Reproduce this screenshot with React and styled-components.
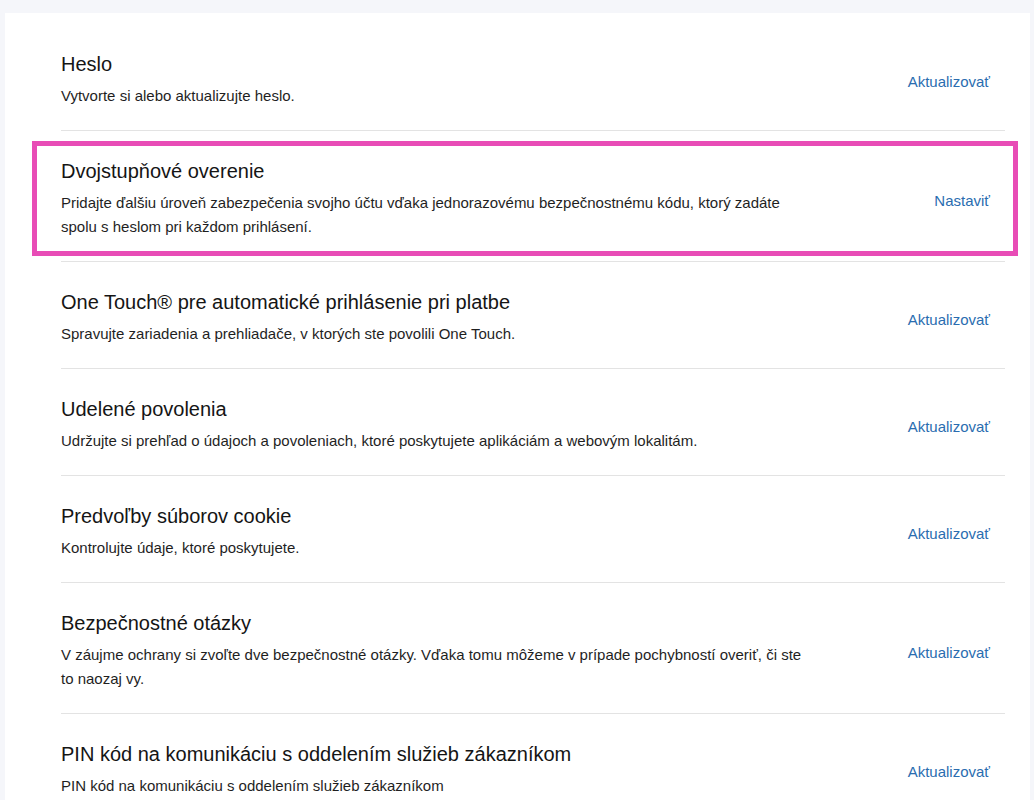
import React from "react";
import styled, { createGlobalStyle } from "styled-components";

const GlobalStyle = createGlobalStyle`
  html, body {
    margin: 0;
    padding: 0;
    background: #f5f6fa;
  }
  body {
    font-family: "Liberation Sans", Arial, sans-serif;
  }
`;

const Page = styled.div`
  padding: 13px 4px 0 5px;
`;

const Card = styled.section`
  background: #ffffff;
  padding: 11px 25px 0 56px;
`;

const Row = styled.div`
  position: relative;
  display: flex;
  align-items: center;
  justify-content: space-between;
  padding: 28px 15px 22px 0;
  border-bottom: 1px solid #e3e3e3;
`;

const Info = styled.div`
  max-width: 748px;
`;

const Title = styled.h3`
  margin: 0 0 8px;
  font-size: 20px;
  line-height: 24px;
  font-weight: 400;
  color: #151515;
`;

const Desc = styled.p`
  margin: 0;
  font-size: 15px;
  line-height: 24px;
  color: #1f1f1f;
`;

const Action = styled.a`
  margin-top: 4px;
  font-size: 15px;
  line-height: 24px;
  color: #2a6db0;
  text-decoration: none;
  white-space: nowrap;
  cursor: pointer;
`;

const Highlight = styled.div`
  position: absolute;
  top: 10px;
  bottom: 5px;
  left: -29px;
  right: -13px;
  border: 5px solid #e84cb6;
  pointer-events: none;
`;

const items = [
  {
    title: "Heslo",
    desc: "Vytvorte si alebo aktualizujte heslo.",
    action: "Aktualizovať",
  },
  {
    title: "Dvojstupňové overenie",
    desc: "Pridajte ďalšiu úroveň zabezpečenia svojho účtu vďaka jednorazovému bezpečnostnému kódu, ktorý zadáte spolu s heslom pri každom prihlásení.",
    action: "Nastaviť",
    highlight: true,
  },
  {
    title: "One Touch® pre automatické prihlásenie pri platbe",
    desc: "Spravujte zariadenia a prehliadače, v ktorých ste povolili One Touch.",
    action: "Aktualizovať",
  },
  {
    title: "Udelené povolenia",
    desc: "Udržujte si prehľad o údajoch a povoleniach, ktoré poskytujete aplikáciám a webovým lokalitám.",
    action: "Aktualizovať",
  },
  {
    title: "Predvoľby súborov cookie",
    desc: "Kontrolujte údaje, ktoré poskytujete.",
    action: "Aktualizovať",
  },
  {
    title: "Bezpečnostné otázky",
    desc: "V záujme ochrany si zvoľte dve bezpečnostné otázky. Vďaka tomu môžeme v prípade pochybností overiť, či ste to naozaj vy.",
    action: "Aktualizovať",
  },
  {
    title: "PIN kód na komunikáciu s oddelením služieb zákazníkom",
    desc: "PIN kód na komunikáciu s oddelením služieb zákazníkom",
    action: "Aktualizovať",
  },
];

export default function App() {
  return (
    <>
      <GlobalStyle />
      <Page>
        <Card>
          {items.map((it) => (
            <Row key={it.title}>
              <Info>
                <Title>{it.title}</Title>
                <Desc>{it.desc}</Desc>
              </Info>
              <Action>{it.action}</Action>
              {it.highlight && <Highlight />}
            </Row>
          ))}
        </Card>
      </Page>
    </>
  );
}
